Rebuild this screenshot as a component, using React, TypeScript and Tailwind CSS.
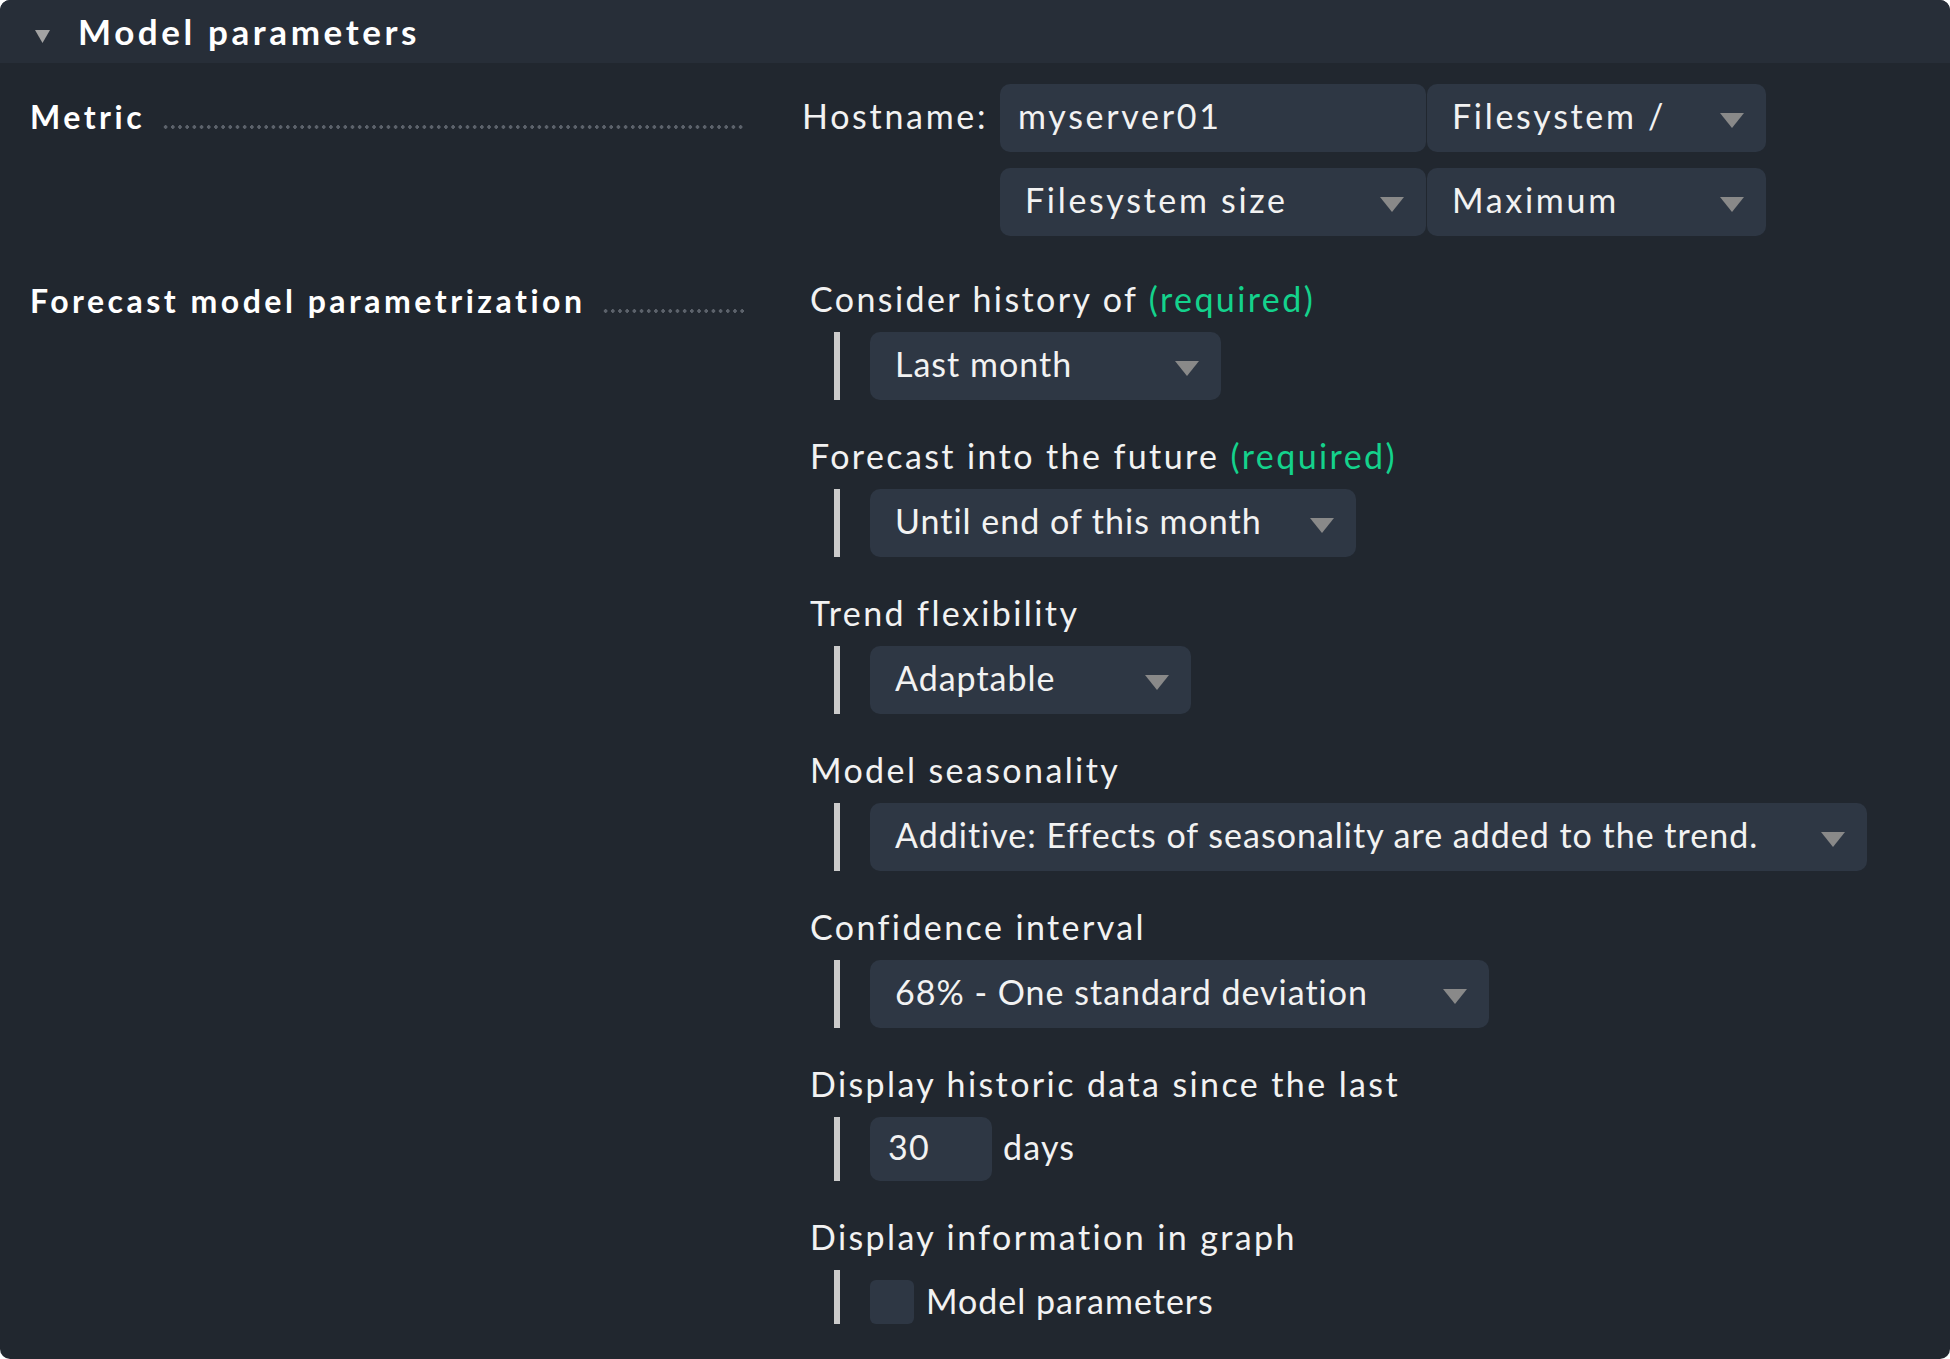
import React from "react";

const Arrow = () => (
  <svg width="24" height="15" viewBox="0 0 24 15" className="mt-[4px] shrink-0">
    <path d="M0 0H24L12 15Z" fill="#898989" />
  </svg>
);

const Bar = () => <div className="ml-[24px] w-[6px] shrink-0 self-stretch bg-[#cbcbcb]" />;

function SelectBox({ value, className }: { value: string; className: string }) {
  return (
    <div
      className={
        "flex h-[68px] items-center justify-between rounded-[10px] bg-[#2e3744] pl-[25px] pr-[22px] " +
        className
      }
    >
      <span className="whitespace-nowrap pb-[5px]">{value}</span>
      <Arrow />
    </div>
  );
}

function Leader({ label }: { label: string }) {
  return (
    <div className="flex w-[715px] items-baseline">
      <span className="whitespace-nowrap text-[32px] font-bold tracking-[3.5px] text-white">{label}</span>
      <span className="ml-[17px] h-[4px] flex-1 bg-[radial-gradient(circle,#5c626b_1.6px,transparent_1.9px)] bg-[length:7.2px_4px] bg-repeat-x" />
    </div>
  );
}

const items = [
  { label: "Consider history of", req: true, value: "Last month", w: "w-[351px]" },
  { label: "Forecast into the future", req: true, value: "Until end of this month", w: "w-[486px]" },
  { label: "Trend flexibility", req: false, value: "Adaptable", w: "w-[321px]" },
  {
    label: "Model seasonality",
    req: false,
    value: "Additive: Effects of seasonality are added to the trend.",
    w: "w-[997px]",
  },
  { label: "Confidence interval", req: false, value: "68% - One standard deviation", w: "w-[619px]" },
];

export default function App() {
  return (
    <div className="min-h-screen w-full bg-white">
      <div className="h-[1359px] w-[1950px] overflow-hidden rounded-[10px] bg-[#21272f] font-[Lato,sans-serif] text-[34px] tracking-[2.4px] text-[#f2f2f2]">
        {/* Header */}
        <div className="flex h-[63px] items-center bg-[#272e38] pl-[35px]">
          <svg width="15" height="13" viewBox="0 0 15 13" className="mt-[10px] shrink-0">
            <path d="M0 0H15L7.5 13Z" fill="#a3a3a3" />
          </svg>
          <span className="ml-[28px] text-[35px] font-bold tracking-[3.6px] text-white">Model parameters</span>
        </div>

        {/* Metric row */}
        <div className="flex pt-[21px]">
          <div className="ml-[30px] flex h-[68px] items-center pb-[3px]">
            <Leader label="Metric" />
          </div>
          <div className="ml-[57px] flex tracking-[2.7px]">
            <div className="flex h-[68px] w-[198px] items-center whitespace-nowrap pb-[5px]">Hostname:</div>
            <div className="grid grid-cols-[426px_339px] gap-x-[1px] gap-y-[16px]">
              <div className="flex h-[68px] items-center rounded-[10px] bg-[#2e3744] pb-[5px] pl-[18px]">myserver01</div>
              <SelectBox value="Filesystem /" className="" />
              <SelectBox value="Filesystem size" className="" />
              <SelectBox value="Maximum" className="" />
            </div>
          </div>
        </div>

        {/* Forecast row */}
        <div className="mt-[47px] flex">
          <div className="ml-[30px] flex h-[36px] items-center">
            <Leader label="Forecast model parametrization" />
          </div>
          <div className="ml-[65px] flex flex-col gap-[40px]">
            {items.map((it) => (
              <div key={it.label} className="flex flex-col">
                <div className="h-[36px] whitespace-nowrap leading-[32px]">
                  {it.label}
                  {it.req && <span className="text-[#14d28c]"> (required)</span>}
                </div>
                <div className="mt-[13px] flex tracking-[1px]">
                  <Bar />
                  <SelectBox value={it.value} className={"ml-[30px] " + it.w} />
                </div>
              </div>
            ))}
            <div className="flex flex-col">
              <div className="h-[36px] whitespace-nowrap leading-[32px]">Display historic data since the last</div>
              <div className="mt-[13px] flex tracking-[1.2px]">
                <Bar />
                <div className="ml-[30px] flex h-[64px] w-[122px] items-center rounded-[10px] bg-[#2e3744] pb-[5px] pl-[18px]">
                  30
                </div>
                <div className="ml-[11px] flex items-center pb-[5px]">days</div>
              </div>
            </div>
            <div className="flex flex-col">
              <div className="h-[36px] whitespace-nowrap leading-[32px]">Display information in graph</div>
              <div className="mt-[13px] flex h-[54px] tracking-[1px]">
                <Bar />
                <div className="ml-[30px] mt-[10px] h-[44px] w-[44px] rounded-[6px] bg-[#2e3744]" />
                <div className="ml-[12px] mt-[10px] flex h-[44px] items-center pb-[3px]">Model parameters</div>
              </div>
            </div>
          </div>
        </div>
      </div>
    </div>
  );
}
